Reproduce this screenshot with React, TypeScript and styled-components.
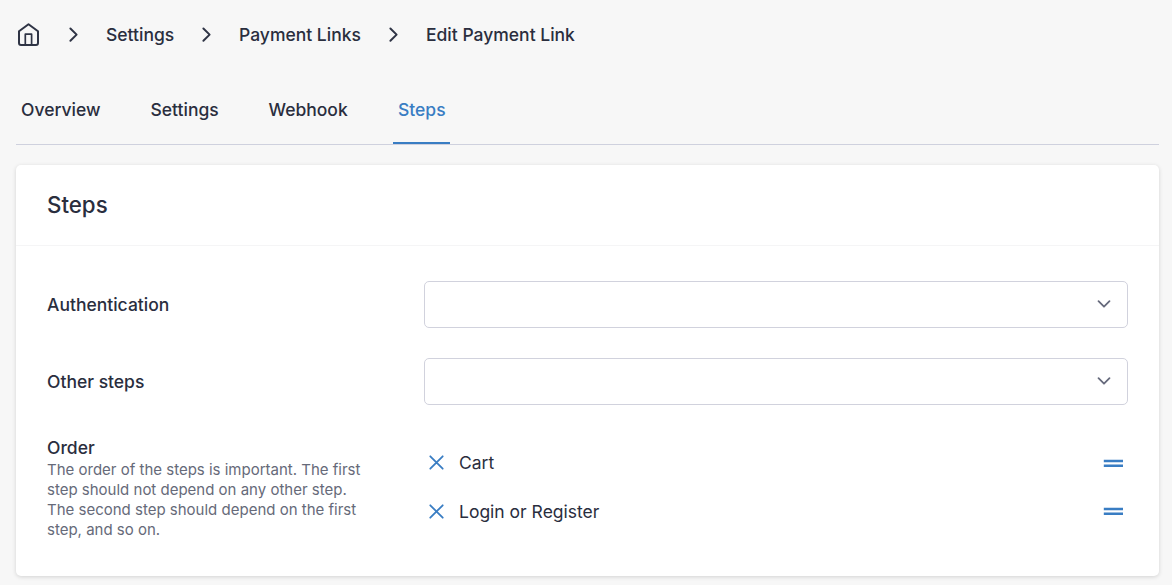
import React from "react";
import styled, { createGlobalStyle } from "styled-components";

const GlobalStyle = createGlobalStyle`
  *, *::before, *::after { box-sizing: border-box; }
  body {
    margin: 0;
    background: #f7f7f7;
    color: #2a2e3e;
    font-family: Inter, "Liberation Sans", sans-serif;
    font-size: 17.5px;
    line-height: 24px;
  }
`;

const Page = styled.main`
  height: 585px;
  padding: 0 13px 0 16px;
  overflow: hidden;
`;

const Breadcrumbs = styled.nav`
  display: flex;
  align-items: center;
  height: 70px;
`;

const Crumb = styled.span<{ $width?: number }>`
  flex: none;
  width: ${(p) => (p.$width ? `${p.$width}px` : "auto")};
  font-weight: 500;
  white-space: nowrap;
`;

const HomeIcon = styled.svg`
  flex: none;
  width: 25px;
  height: 25px;
  margin: 0 27px 1px 0;
`;

const CrumbArrow = styled.svg`
  flex: none;
  width: 12px;
  height: 18px;
  margin: 0 26px 0 0;
`;

const Tabs = styled.div`
  display: flex;
  gap: 41px;
  height: 75px;
  border-bottom: 1px solid #cfd1de;
`;

const Tab = styled.button<{ $active?: boolean; $width: number }>`
  flex: none;
  width: ${(p) => p.$width}px;
  height: 74px;
  padding: 7px 0 0 5px;
  border: 0;
  border-bottom: 2px solid ${(p) => (p.$active ? "#397dc3" : "transparent")};
  background: none;
  color: ${(p) => (p.$active ? "#397dc3" : "inherit")};
  font: inherit;
  font-weight: 500;
  text-align: left;
  white-space: nowrap;
`;

const Card = styled.section`
  height: 411px;
  margin-top: 20px;
  border-radius: 5px;
  background: #fff;
  box-shadow: 0 1px 4px rgba(0, 0, 0, 0.15);
`;

const CardHeader = styled.header`
  display: flex;
  align-items: center;
  height: 81px;
  padding: 0 31px;
  border-bottom: 1px solid #f5f5f6;
`;

const Title = styled.h2`
  margin: 0;
  font-size: 22.3px;
  font-weight: 500;
  line-height: 30px;
`;

const Form = styled.div`
  display: flex;
  flex-direction: column;
  gap: 30px;
  padding: 35px 31px 0;
`;

const Field = styled.div<{ $top?: boolean }>`
  display: grid;
  grid-template-columns: 377px 1fr;
  align-items: ${(p) => (p.$top ? "start" : "center")};
`;

const Label = styled.div`
  font-weight: 500;
`;

const OrderInfo = styled.div`
  padding-top: 1px;
`;

const Hint = styled.p`
  width: 330px;
  margin: 0;
  color: #666a79;
  font-size: 15px;
  line-height: 20px;
`;

const Select = styled.button`
  display: flex;
  align-items: center;
  justify-content: flex-end;
  height: 47px;
  padding: 0 16px 2px;
  border: 1px solid #d1d2dd;
  border-radius: 5px;
  background: #fff;
`;

const StepList = styled.ul`
  display: flex;
  flex-direction: column;
  gap: 25px;
  margin: 0;
  padding: 16px 4px 0;
  list-style: none;
`;

const RemoveIcon = styled.svg`
  width: 17px;
  height: 17px;
  margin-bottom: 1px;
`;

const DragHandle = styled.svg`
  width: 20px;
  height: 8px;
  margin-right: 1px;
`;

const Step = styled.li`
  display: flex;
  align-items: center;
  height: 24px;

  & + & ${DragHandle} {
    margin-bottom: 2px;
  }
`;

const StepName = styled.span`
  flex: 1;
  margin-left: 14px;
`;

const Separator = () => (
  <CrumbArrow viewBox="0 0 12 18" fill="none" stroke="#2f3445" strokeWidth="2" strokeLinecap="round" strokeLinejoin="round">
    <path d="M2.4 2.5 8.6 8.6 2.4 14.7" />
  </CrumbArrow>
);

const Dropdown = ({ label }: { label: string }) => (
  <Select type="button" aria-label={label}>
    <svg width="14" height="10" viewBox="0 0 14 10" fill="none" stroke="#666a7c" strokeWidth="1.8" strokeLinecap="round" strokeLinejoin="round">
      <path d="M1.5 2.2 7 7.7 12.5 2.2" />
    </svg>
  </Select>
);

const tabs = [
  { name: "Overview", width: 88.5 },
  { name: "Settings", width: 77 },
  { name: "Webhook", width: 88.5 },
  { name: "Steps", width: 57 },
];

const steps = ["Cart", "Login or Register"];

export default function App() {
  return (
    <>
      <GlobalStyle />
      <Page>
        <Breadcrumbs>
          <HomeIcon viewBox="0 0 25 25" fill="none" stroke="#2f3445" strokeWidth="2" strokeLinecap="round" strokeLinejoin="round">
            <path d="M3 9.3 12.5 2.2 22 9.3V20.9a2 2 0 0 1-2 2H5a2 2 0 0 1-2-2Z" />
            <path d="M9.3 22.5V12.2h6.3V22.5" strokeWidth="1.7" />
          </HomeIcon>
          <Separator />
          <Crumb $width={95}>Settings</Crumb>
          <Separator />
          <Crumb $width={149}>Payment Links</Crumb>
          <Separator />
          <Crumb>Edit Payment Link</Crumb>
        </Breadcrumbs>
        <Tabs role="tablist">
          {tabs.map((t) => (
            <Tab key={t.name} $width={t.width} $active={t.name === "Steps"} role="tab">
              {t.name}
            </Tab>
          ))}
        </Tabs>
        <Card>
          <CardHeader>
            <Title>Steps</Title>
          </CardHeader>
          <Form>
            <Field>
              <Label>Authentication</Label>
              <Dropdown label="Authentication" />
            </Field>
            <Field>
              <Label>Other steps</Label>
              <Dropdown label="Other steps" />
            </Field>
            <Field $top>
              <OrderInfo>
                <Label>Order</Label>
                <Hint>
                  The order of the steps is important. The first step should not depend on any other step. The second
                  step should depend on the first step, and so on.
                </Hint>
              </OrderInfo>
              <StepList>
                {steps.map((s) => (
                  <Step key={s}>
                    <RemoveIcon viewBox="0 0 17 17" fill="none" stroke="#397dc3" strokeWidth="1.8" strokeLinecap="round">
                      <path d="M2.3 2.3 14.7 14.7M14.7 2.3 2.3 14.7" />
                    </RemoveIcon>
                    <StepName>{s}</StepName>
                    <DragHandle viewBox="0 0 20 8" fill="#397dc3">
                      <path d="M.8.8H20v2.5H.8zM.8 5.5H20V8H.8z" />
                    </DragHandle>
                  </Step>
                ))}
              </StepList>
            </Field>
          </Form>
        </Card>
      </Page>
    </>
  );
}
